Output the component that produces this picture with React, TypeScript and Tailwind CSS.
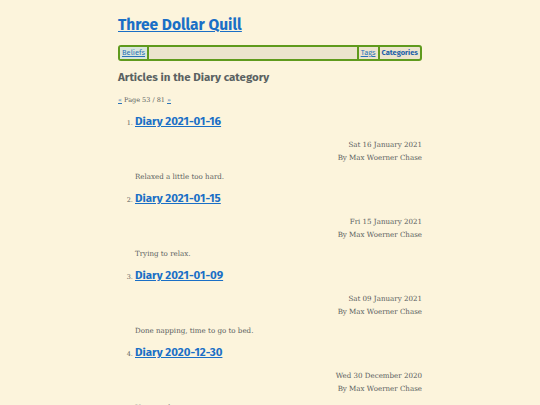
const posts = [
  { title: "Diary 2021-01-16", date: "Sat 16 January 2021", summary: "Relaxed a little too hard." },
  { title: "Diary 2021-01-15", date: "Fri 15 January 2021", summary: "Trying to relax." },
  { title: "Diary 2021-01-09", date: "Sat 09 January 2021", summary: "Done napping, time to go to bed." },
  { title: "Diary 2020-12-30", date: "Wed 30 December 2020", summary: "Uggguugh." },
];

const heading = { fontFamily: '"Fira Sans", Lato, "Open Sans", sans-serif' };

export default function App() {
  return (
    <main className="min-h-[405px] bg-[#fcf4dc] text-[#5a5e5e]" style={{ fontFamily: '"Roboto Slab", "DejaVu Serif", serif' }}>
      <div className="w-[304px] mx-auto pt-[14px]">
        <h1 className="text-[15.5px] font-bold leading-[22px] text-[#1a6fc6] underline" style={heading}>
          <a href="#">Three Dollar Quill</a>
        </h1>

        {/* NAV */}
        <nav className="mt-[9px] h-[16px] flex items-stretch border-2 border-[#5f9a1d] rounded-[3px] bg-[#ece4ce] text-[7.5px] leading-[12px]" style={heading}>
          <a href="#" className="px-[2px] bg-[#d9e6dc] text-[#2a73b8] underline border-r-2 border-[#5f9a1d]">Beliefs</a>
          <div className="flex-1" />
          <a href="#" className="px-[2px] text-[#2a73b8] underline border-l-2 border-[#5f9a1d]">Tags</a>
          <a href="#" className="px-[2px] font-bold text-[#1d5fa8] border-l-2 border-[#5f9a1d]">Categories</a>
        </nav>

        <h2 className="mt-[7px] text-[11.5px] font-bold leading-[18px] text-[#5a6262]" style={heading}>
          Articles in the Diary category
        </h2>

        <p className="mt-[9px] text-[6.5px] leading-[10px]">
          <a href="#" className="text-[#2a73b8] underline">«</a> Page 53 / 81{" "}
          <a href="#" className="text-[#2a73b8] underline">»</a>
        </p>

        <ol className="mt-[3px] pl-[17px] list-decimal marker:text-[6.5px]">
          {posts.map((p) => (
            <li key={p.title} className="h-[77px]">
              <a href="#" className="text-[11.5px] font-bold leading-[20px] text-[#1a6fc6] underline" style={heading}>
                {p.title}
              </a>
              <div className="mt-[7px] text-right text-[7.1px] leading-[12.5px]">
                <div>{p.date}</div>
                <div>By Max Woerner Chase</div>
              </div>
              <p className="mt-[7px] text-[7.1px] leading-[12px]">{p.summary}</p>
            </li>
          ))}
        </ol>
      </div>
    </main>
  );
}
